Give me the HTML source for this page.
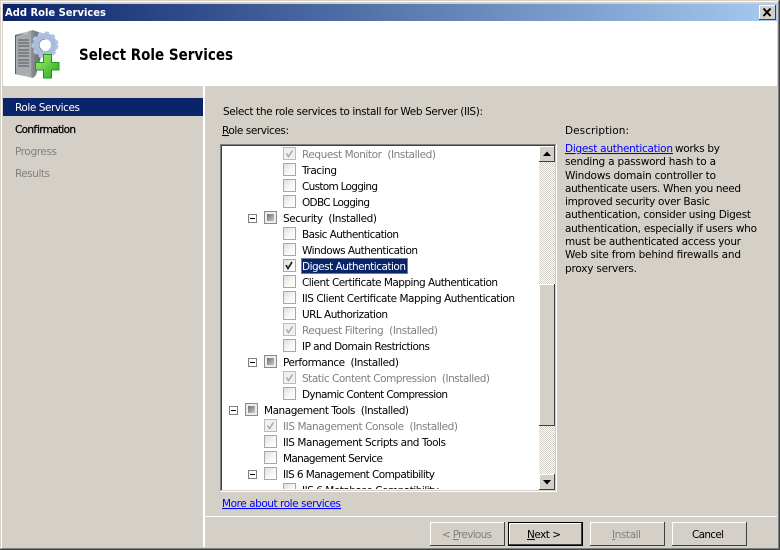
<!DOCTYPE html>
<html><head><meta charset="utf-8"><style>
html,body{margin:0;padding:0;background:#d4d0c8;width:780px;height:550px;overflow:hidden}
svg{display:block}
text{font-family:"DejaVu Sans","Liberation Sans",sans-serif;font-size:10.5px;fill:#000;white-space:pre}
.g{fill:#808080}
.b{font-weight:bold}
.l{fill:#0000ff;text-decoration:underline}
.d{fill:#808080}
.s{fill:#fff}
</style></head><body>
<svg width="780" height="550" viewBox="0 0 780 550" xmlns="http://www.w3.org/2000/svg">
<defs>
<linearGradient id="tb"><stop offset="0" stop-color="#0a246a"/><stop offset="1" stop-color="#a6caf0"/></linearGradient>
<linearGradient id="cb" x1="0" y1="0" x2="1" y2="1"><stop offset="0" stop-color="#dcdcd8"/><stop offset=".55" stop-color="#f6f6f4"/><stop offset="1" stop-color="#fff"/></linearGradient>
<linearGradient id="tri" x1="0" y1="0" x2="1" y2="1"><stop offset="0" stop-color="#707070"/><stop offset="1" stop-color="#c8c8c8"/></linearGradient>
<linearGradient id="tw" x1="0" y1="0" x2="1" y2="0"><stop offset="0" stop-color="#555"/><stop offset=".35" stop-color="#c8c8c8"/><stop offset=".55" stop-color="#8a8f96"/><stop offset="1" stop-color="#4c5058"/></linearGradient>
<linearGradient id="gr" x1="0" y1="0" x2="1" y2="1"><stop offset="0" stop-color="#a8f070"/><stop offset="1" stop-color="#22a81c"/></linearGradient>
<pattern id="dith" width="2" height="2" patternUnits="userSpaceOnUse"><rect width="2" height="2" fill="#fff"/><rect width="1" height="1" fill="#d4d0c8"/><rect x="1" y="1" width="1" height="1" fill="#d4d0c8"/></pattern>
<clipPath id="lc"><rect x="222" y="146" width="317" height="343"/></clipPath>
<g id="c"><rect x=".5" y=".5" width="12" height="12" fill="url(#cb)" stroke="#a8a8a8"/></g>
<g id="cd"><rect x=".5" y=".5" width="12" height="12" fill="#f0f0ee" stroke="#bcbcbc"/><path d="M3.500 6.500l2 3 4-6" fill="none" stroke="#a8a8a8" stroke-width="1.500"/></g>
<g id="t"><rect x=".5" y=".5" width="12" height="12" fill="#ecece8" stroke="#8a8a8a"/><rect x="3" y="3" width="7" height="7" fill="url(#tri)"/></g>
<g id="e"><rect x=".5" y=".5" width="8" height="8" fill="#fff" stroke="#808080"/><path d="M2 4.500h5" stroke="#000"/></g>
</defs>

<!-- window frame -->
<rect width="780" height="550" fill="#d4d0c8"/>
<rect x="1" y="1" width="777" height="1" fill="#fff"/>
<rect x="1" y="1" width="1" height="547" fill="#fff"/>
<rect x="778" y="1" width="1" height="548" fill="#808080"/>
<rect x="779" y="0" width="1" height="550" fill="#404040"/>
<rect x="1" y="548" width="778" height="1" fill="#808080"/>
<rect x="0" y="549" width="780" height="1" fill="#404040"/>

<!-- title bar -->
<rect x="3" y="4" width="774" height="17" fill="url(#tb)"/>
<text x="5" y="16" class="b s" style="font-size:11px" textLength="101" lengthAdjust="spacingAndGlyphs">Add Role Services</text>
<rect x="759" y="5" width="16" height="14" fill="#d4d0c8"/>
<path d="M759.500 19V5.500H775" fill="none" stroke="#fff"/>
<path d="M775.500 5v14.500H759" fill="none" stroke="#404040"/>
<path d="M763.500 8.500l7 7.500M770.500 8.500l-7 7.500" stroke="#000" stroke-width="2"/>

<!-- header -->
<rect x="3" y="21" width="774" height="65" fill="#fff"/>
<path d="M15 35l18-5 13 5v3l-10 37-3 3-18-4z" fill="url(#tw)"/>
<path d="M16 36l15-3v44l-15-3z" fill="#a8acb0"/>
<path d="M18 40h11M18 43h11M18 46h11M18 50h11M18 53h11M18 56h11M18 60h11M18 63h11M18 66h11" stroke="#555"/>
<rect x="25" y="73" width="3" height="2" fill="#7fe04a"/>
<circle cx="45" cy="45" r="9" fill="none" stroke="#a9bcdc" stroke-width="6"/>
<circle cx="45" cy="45" r="12" fill="none" stroke="#b4c4e0" stroke-width="3" stroke-dasharray="4 3"/>
<circle cx="45" cy="45" r="5.500" fill="#fff"/>
<path d="M43.500 54.500h8v8h7.500v7.500h-7.500v8h-8v-8h-8v-7.500h8z" fill="url(#gr)" stroke="#1a9a18"/>
<text x="79" y="60" class="b" style="font-size:16px" textLength="154" lengthAdjust="spacingAndGlyphs">Select Role Services</text>

<!-- sidebar -->
<rect x="203" y="86" width="2" height="461" fill="#fff"/>
<rect x="3" y="98" width="200" height="18" fill="#0a246a"/>
<text x="15" y="111" class="s" textLength="65">Role Services</text>
<text x="15" y="133" textLength="61" style="stroke:#000;stroke-width:.25">Confirmation</text>
<text x="15" y="155" class="g" textLength="42">Progress</text>
<text x="15" y="177" class="g" textLength="35">Results</text>

<!-- labels -->
<text x="223" y="115" textLength="260">Select the role services to install for Web Server (IIS):</text>
<text x="222" y="134" textLength="67"><tspan text-decoration="underline">R</tspan>ole services:</text>
<text x="565" y="134" textLength="64">Description:</text>

<!-- list box -->
<rect x="222" y="146" width="317" height="344" fill="#fff"/>
<path d="M220.500 491V144.500H556" fill="none" stroke="#808080"/>
<path d="M221.500 490V145.500H555" fill="none" stroke="#404040"/>
<path d="M220 491.500H556.500V144" fill="none" stroke="#fff"/>

<g clip-path="url(#lc)">
<use href="#cd" x="283" y="147"/><text x="302" y="158" class="g" textLength="134">Request Monitor  (Installed)</text>
<use href="#c" x="283" y="163"/><text x="302" y="174" textLength="35">Tracing</text>
<use href="#c" x="283" y="179"/><text x="302" y="190" textLength="76">Custom Logging</text>
<use href="#c" x="283" y="195"/><text x="302" y="206" textLength="68">ODBC Logging</text>
<use href="#e" x="248" y="214"/><use href="#t" x="264" y="211"/><text x="283" y="222" textLength="94">Security  (Installed)</text>
<use href="#c" x="283" y="227"/><text x="302" y="238" textLength="97">Basic Authentication</text>
<use href="#c" x="283" y="243"/><text x="302" y="254" textLength="116">Windows Authentication</text>
<use href="#c" x="283" y="259"/><path d="M286 265l2 3.500 4-6.500" fill="none" stroke="#222" stroke-width="1.700"/>
<rect x="301" y="258" width="107" height="16" fill="#0a246a"/>
<rect x="301.500" y="258.500" width="106" height="15" fill="none" stroke="#d4d0c8" stroke-dasharray="1 1"/>
<text x="302" y="270" class="s" textLength="104">Digest Authentication</text>
<use href="#c" x="283" y="275"/><text x="302" y="286" textLength="196">Client Certificate Mapping Authentication</text>
<use href="#c" x="283" y="291"/><text x="302" y="302" textLength="213">IIS Client Certificate Mapping Authentication</text>
<use href="#c" x="283" y="307"/><text x="302" y="318" textLength="86">URL Authorization</text>
<use href="#cd" x="283" y="323"/><text x="302" y="334" class="g" textLength="136">Request Filtering  (Installed)</text>
<use href="#c" x="283" y="339"/><text x="302" y="350" textLength="128">IP and Domain Restrictions</text>
<use href="#e" x="248" y="358"/><use href="#t" x="264" y="355"/><text x="283" y="366" textLength="116">Performance  (Installed)</text>
<use href="#cd" x="283" y="371"/><text x="302" y="382" class="g" textLength="188">Static Content Compression  (Installed)</text>
<use href="#c" x="283" y="387"/><text x="302" y="398" textLength="146">Dynamic Content Compression</text>
<use href="#e" x="229" y="406"/><use href="#t" x="245" y="403"/><text x="264" y="414" textLength="145">Management Tools  (Installed)</text>
<use href="#cd" x="264" y="419"/><text x="283" y="430" class="g" textLength="175">IIS Management Console  (Installed)</text>
<use href="#c" x="264" y="435"/><text x="283" y="446" textLength="163">IIS Management Scripts and Tools</text>
<use href="#c" x="264" y="451"/><text x="283" y="462" textLength="100">Management Service</text>
<use href="#e" x="248" y="470"/><use href="#c" x="264" y="467"/><text x="283" y="478" textLength="152">IIS 6 Management Compatibility</text>
<use href="#c" x="283" y="483"/><text x="302" y="494" textLength="137">IIS 6 Metabase Compatibility</text>
</g>

<!-- scrollbar -->
<rect x="539" y="146" width="16" height="344" fill="url(#dith)"/>
<g>
<rect x="539" y="146" width="16" height="16" fill="#d4d0c8"/>
<path d="M539.500 161V146.500H554" fill="none" stroke="#fff"/>
<path d="M554.500 146v15.500H539" fill="none" stroke="#404040"/>
<path d="M543 156h8l-4-4.500z" fill="#000"/>
<rect x="539" y="284" width="16" height="142" fill="#d4d0c8"/>
<path d="M539.500 425V284.500H554" fill="none" stroke="#fff"/>
<path d="M554.500 284v141.500H539" fill="none" stroke="#404040"/>
<rect x="539" y="474" width="16" height="16" fill="#d4d0c8"/>
<path d="M539.500 489V474.500H554" fill="none" stroke="#fff"/>
<path d="M554.500 474v15.500H539" fill="none" stroke="#404040"/>
<path d="M543 480h8l-4 4.500z" fill="#000"/>
</g>

<!-- link -->
<text x="222" y="507" class="l" textLength="119">More about role services</text>

<!-- description -->
<text x="565" y="152" class="l" textLength="108">Digest authentication</text>
<text x="675" y="152" textLength="45">works by</text>
<text x="565" y="165" textLength="151">sending a password hash to a</text>
<text x="565" y="179" textLength="151">Windows domain controller to</text>
<text x="565" y="192" textLength="176">authenticate users. When you need</text>
<text x="565" y="205" textLength="145">improved security over Basic</text>
<text x="565" y="218" textLength="186">authentication, consider using Digest</text>
<text x="565" y="232" textLength="192">authentication, especially if users who</text>
<text x="565" y="245" textLength="176">must be authenticated access your</text>
<text x="565" y="258" textLength="176">Web site from behind firewalls and</text>
<text x="565" y="272" textLength="72">proxy servers.</text>

<!-- footer -->
<rect x="205" y="516" width="572" height="1" fill="#fff"/>

<!-- buttons -->
<path d="M430.500 545V522.500H504" fill="none" stroke="#fff"/>
<path d="M504.500 522v23.500H430" fill="none" stroke="#404040"/>
<text x="442" y="538" class="d" textLength="50">&lt; <tspan text-decoration="underline">P</tspan>revious</text>

<rect x="508.500" y="522.500" width="74" height="23" fill="none" stroke="#000"/>
<path d="M509.500 544V523.500H581" fill="none" stroke="#fff"/>
<path d="M581.500 523v21.500H509" fill="none" stroke="#404040"/>
<text x="527" y="538" textLength="34"><tspan text-decoration="underline">N</tspan>ext &gt;</text>

<path d="M590.500 545V522.500H664" fill="none" stroke="#fff"/>
<path d="M664.500 522v23.500H590" fill="none" stroke="#404040"/>
<text x="612" y="538" class="d" textLength="29"><tspan text-decoration="underline">I</tspan>nstall</text>

<path d="M672.500 545V522.500H746" fill="none" stroke="#fff"/>
<path d="M746.500 522v23.500H672" fill="none" stroke="#404040"/>
<text x="692" y="538" textLength="32">Cancel</text>
</svg>
</body></html>
